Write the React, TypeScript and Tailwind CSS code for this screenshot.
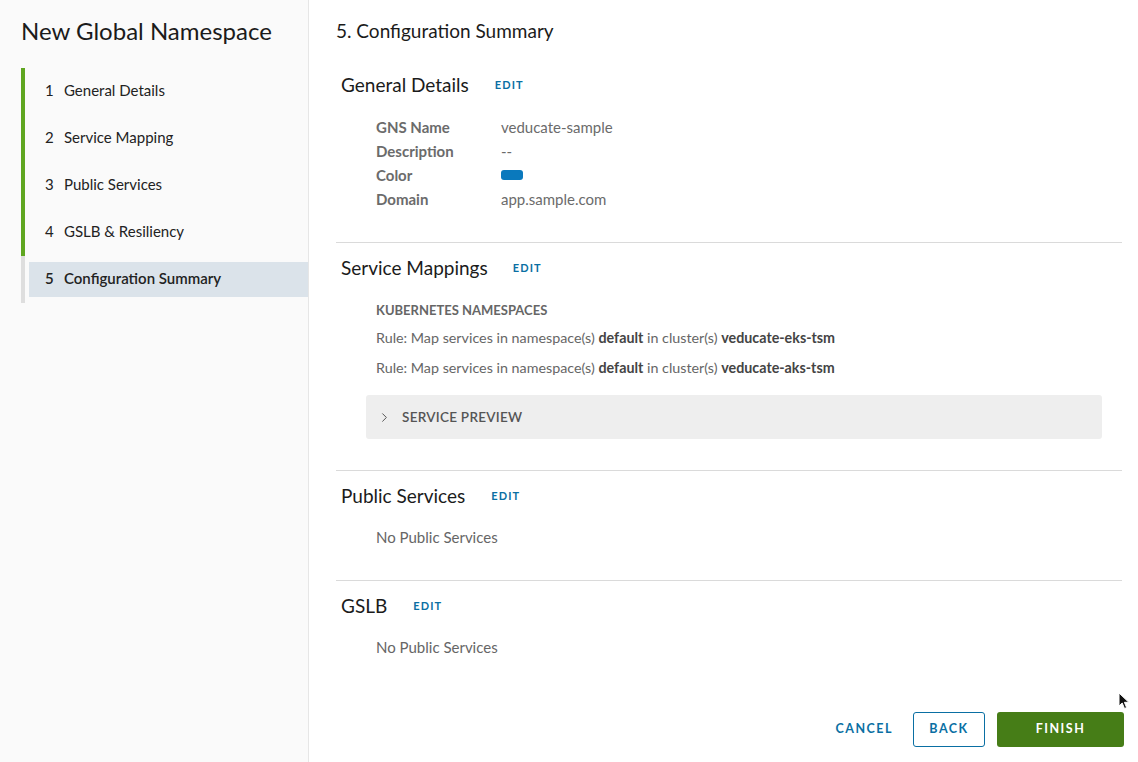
import { ChevronRight } from "lucide-react"

const steps = [
  { n: 1, label: "General Details", done: true },
  { n: 2, label: "Service Mapping", done: true },
  { n: 3, label: "Public Services", done: true },
  { n: 4, label: "GSLB & Resiliency", done: true },
  { n: 5, label: "Configuration Summary", done: false },
]

function SectionHeading({ title, gap }: { title: string; gap: string }) {
  return (
    <div className="flex items-center h-[28px] pl-[5px]">
      <h2 className="text-[19px] text-[#1b1b1b] leading-[28px]">{title}</h2>
      <button className={`${gap} text-[11px] font-bold tracking-[0.1em] text-[#0a6fa3]`}>EDIT</button>
    </div>
  )
}

function Divider({ mt }: { mt: string }) {
  return <div className={`${mt} h-px bg-[#dadada] mr-[16px]`} />
}

export default function App() {
  return (
    <div
      className="relative flex h-[762px] w-full bg-white overflow-hidden"
      style={{ fontFamily: "Lato, 'Open Sans', sans-serif" }}
    >
      <aside className="w-[309px] shrink-0 bg-[#fafafa] border-r border-[#e6e6e6]">
        <h1 className="mt-[17px] pl-[21px] text-[24px] leading-[28px] text-[#1b1b1b]">New Global Namespace</h1>
        <ul className="mt-[23px] pl-[21px]">
          {steps.map((s) => (
            <li
              key={s.n}
              className={`border-l-[4px] py-[6px] ${s.done ? "border-[#5fa620]" : "border-[#dedede]"}`}
            >
              <div
                className={`ml-[4px] h-[35px] flex items-center pl-[16px] pb-[2px] text-[15px] text-[#222] ${
                  s.done ? "" : "bg-[#dbe3ea] font-semibold"
                }`}
              >
                <span className="w-[19px]">{s.n}</span>
                <span>{s.label}</span>
              </div>
            </li>
          ))}
        </ul>
      </aside>

      <main className="flex-1 pl-[27px] flex flex-col">
        <div className="mt-[19px] text-[19px] leading-[24px] text-[#1b1b1b]">5. Configuration Summary</div>

        <div className="mt-[28px]">
          <SectionHeading title="General Details" gap="ml-[26px]" />
        </div>
        <div className="mt-[16px] pl-[40px] text-[15px]">
          {[
            ["GNS Name", "veducate-sample"],
            ["Description", "--"],
            ["Color", ""],
            ["Domain", "app.sample.com"],
          ].map(([k, v]) => (
            <div key={k} className="flex h-[24px] items-center">
              <span className="w-[125px] font-bold text-[#6b6b6b]">{k}</span>
              {k === "Color" ? (
                <span className="w-[22px] h-[10px] rounded-[3px] bg-[#0a79bd]" />
              ) : (
                <span className="text-[#6b6b6b]">{v}</span>
              )}
            </div>
          ))}
        </div>

        <Divider mt="mt-[31px]" />

        <div className="mt-[11px]">
          <SectionHeading title="Service Mappings" gap="ml-[25px]" />
        </div>
        <div className="mt-[18px] pl-[40px] text-[13px] leading-[20px] font-bold text-[#666]">
          KUBERNETES NAMESPACES
        </div>
        {["veducate-eks-tsm", "veducate-aks-tsm"].map((c, i) => (
          <div key={c} className={`${i === 0 ? "mt-[8px]" : "mt-[10px]"} pl-[40px] text-[14.3px] leading-[20px] text-[#666]`}>
            Rule: Map services in namespace(s) <b className="text-[#444]">default</b> in cluster(s){" "}
            <b className="text-[#444]">{c}</b>
          </div>
        ))}
        <div className="mt-[17px] ml-[30px] mr-[36px] h-[44px] rounded-[3px] bg-[#eeeeee] flex items-center pl-[11px]">
          <ChevronRight className="w-[15px] h-[15px] text-[#555]" strokeWidth={1.6} />
          <span className="ml-[10px] text-[13.5px] font-semibold text-[#555] tracking-[0.02em]">SERVICE PREVIEW</span>
        </div>

        <Divider mt="mt-[31px]" />

        <div className="mt-[11px]">
          <SectionHeading title="Public Services" gap="ml-[26px]" />
        </div>
        <div className="mt-[17px] pl-[40px] text-[15px] leading-[20px] text-[#666]">No Public Services</div>

        <Divider mt="mt-[33px]" />

        <div className="mt-[11px]">
          <SectionHeading title="GSLB" gap="ml-[26px]" />
        </div>
        <div className="mt-[17px] pl-[40px] text-[15px] leading-[20px] text-[#666]">No Public Services</div>

        <div className="mt-[55px] flex justify-end items-center pr-[14px] gap-[12px]">
          <button className="h-[35px] mr-[8px] text-[12.5px] font-bold tracking-[0.12em] text-[#0a6fa3]">
            CANCEL
          </button>
          <button className="h-[35px] w-[72px] rounded-[3px] border border-[#0a6fa3] text-[12.5px] font-bold tracking-[0.12em] text-[#0a6fa3]">
            BACK
          </button>
          <button className="h-[35px] w-[127px] rounded-[3px] bg-[#467d17] text-[12.5px] font-bold tracking-[0.12em] text-white">
            FINISH
          </button>
        </div>
      </main>

      <svg className="absolute left-[1118px] top-[692px]" width="12" height="18" viewBox="0 0 12 18">
        <path d="M1 1 L1 14 L4.2 11 L6.5 16.5 L8.6 15.6 L6.4 10.3 L10.8 10.3 Z" fill="#111" stroke="#fff" strokeWidth="1" />
      </svg>
    </div>
  )
}
